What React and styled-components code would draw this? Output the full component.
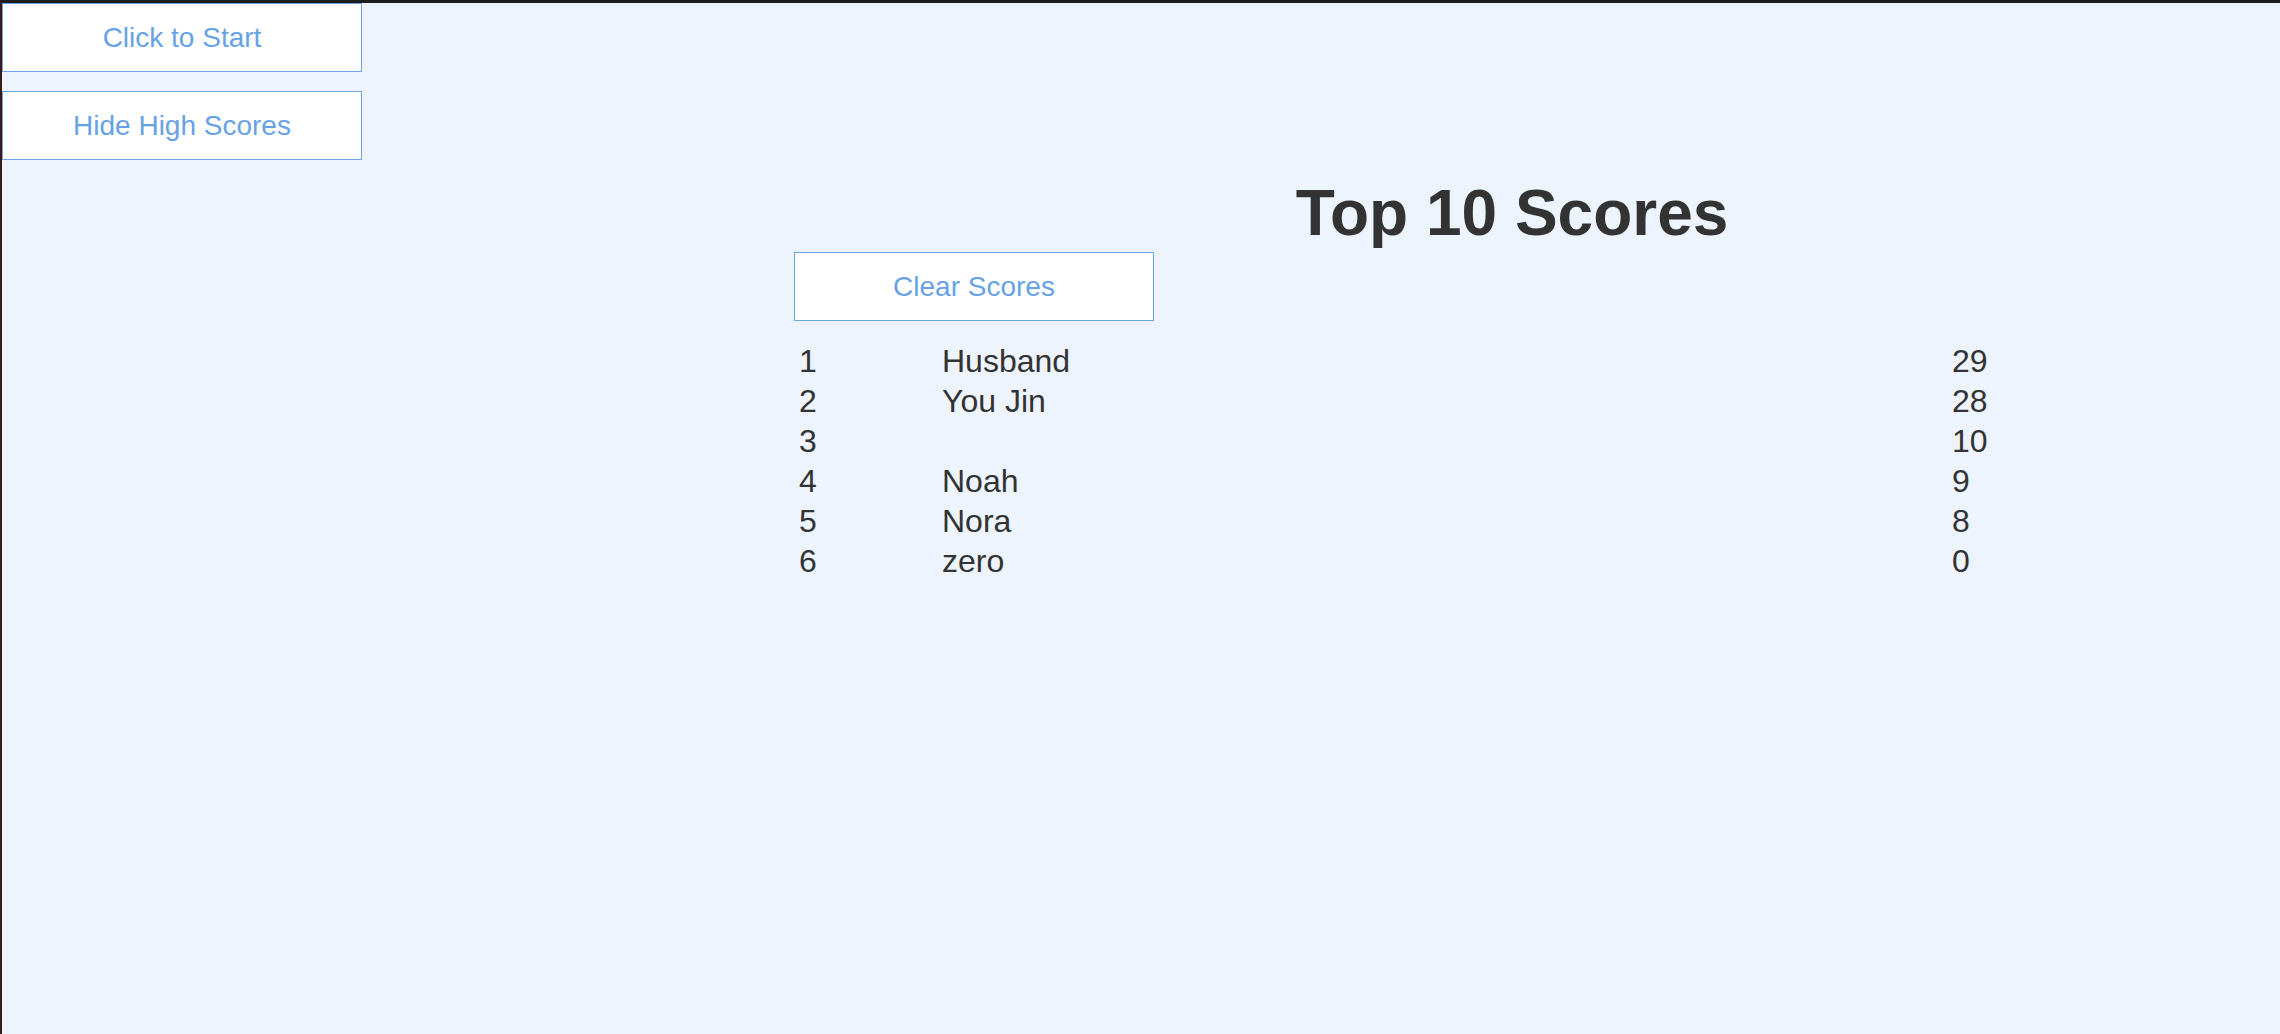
import React, { useState } from "react";
import styled, { createGlobalStyle } from "styled-components";

const GlobalStyle = createGlobalStyle`
  html, body {
    margin: 0;
    padding: 0;
    background: #edf4fe;
  }
  body {
    min-height: 100vh;
    box-sizing: border-box;
    border-top: 3px solid #1c1c1c;
    border-left: 2px solid #3b1c12;
    font-family: "Liberation Sans", Arial, sans-serif;
    color: #333;
  }
`;

const scores = [
  { name: "Husband", score: 29 },
  { name: "You Jin", score: 28 },
  { name: "", score: 10 },
  { name: "Noah", score: 9 },
  { name: "Nora", score: 8 },
  { name: "zero", score: 0 },
];

const App = () => {
  const [showScores, setShowScores] = useState(true);

  return (
    <Page>
      <GlobalStyle />
      <Controls>
        <Button>Click to Start</Button>
        <Button onClick={() => setShowScores(!showScores)}>
          {showScores ? "Hide High Scores" : "Show High Scores"}
        </Button>
      </Controls>
      {showScores && (
        <ScoresPanel>
          <Title>Top 10 Scores</Title>
          <Button>Clear Scores</Button>
          <ScoreList>
            {scores.map((s, i) => (
              <ScoreRow key={i}>
                <Rank>{i + 1}</Rank>
                <span>{s.name}</span>
                <span>{s.score}</span>
              </ScoreRow>
            ))}
          </ScoreList>
        </ScoresPanel>
      )}
    </Page>
  );
};

const Page = styled.div`
  display: flex;
  flex-direction: column;
`;

const Controls = styled.div`
  display: flex;
  flex-direction: column;
  gap: 19px;
`;

const Button = styled.button`
  width: 360px;
  height: 69px;
  box-sizing: border-box;
  background: #fff;
  border: 1px solid #6aa3e6;
  color: #67a2e6;
  font-family: "Liberation Sans", Arial, sans-serif;
  font-size: 28px;
  padding: 0;
  cursor: pointer;
`;

const ScoresPanel = styled.div`
  display: flex;
  flex-direction: column;
  align-items: flex-start;
  margin: 16px 0 0 792px;
  width: 1436px;
`;

const Title = styled.h1`
  align-self: stretch;
  margin: 0 0 2px;
  text-align: center;
  font-size: 64px;
  font-weight: bold;
  line-height: 74px;
  color: #333;
`;

const ScoreList = styled.div`
  display: flex;
  flex-direction: column;
  margin-top: 20px;
`;

const ScoreRow = styled.div`
  display: grid;
  grid-template-columns: 146px 1010px auto;
  padding-left: 2px;
  font-size: 32px;
  line-height: 40px;
  color: #333;
`;

const Rank = styled.span`
  padding-left: 3px;
`;

export default App;
